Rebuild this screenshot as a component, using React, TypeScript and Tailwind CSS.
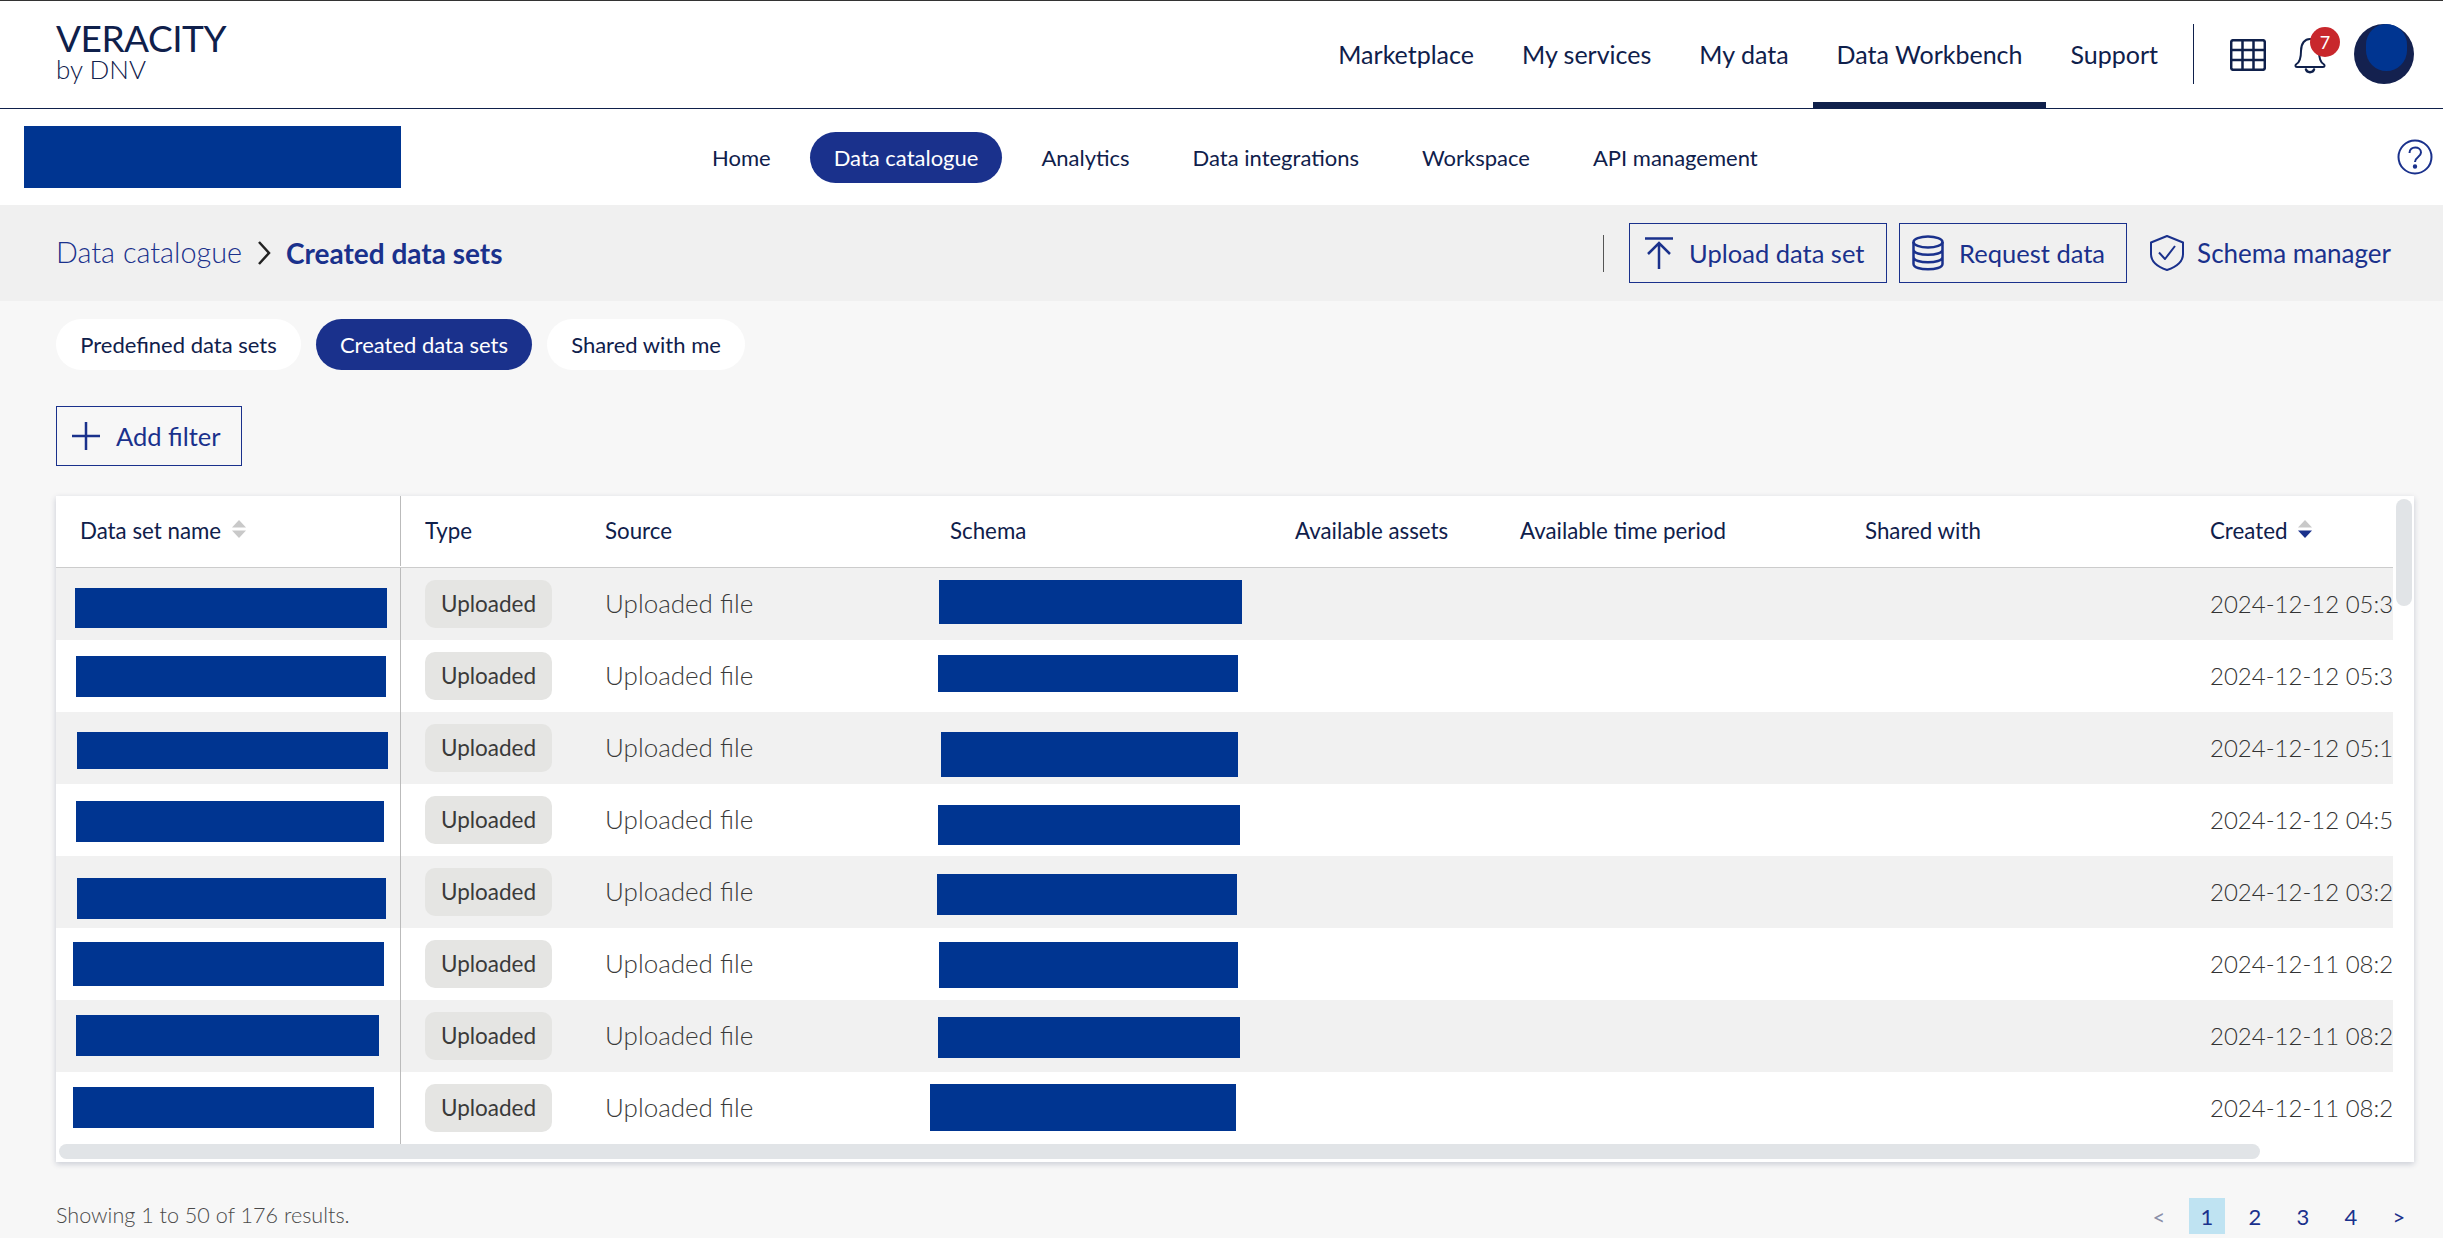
import React from "react";

const navy = "#0f204b";

const topNav = ["Marketplace", "My services", "My data", "Data Workbench", "Support"];
const subNav = ["Home", "Data catalogue", "Analytics", "Data integrations", "Workspace", "API management"];

// redaction boxes over the name and schema cells: [left, top, width, height] relative to the row
const rows = [
  { date: "2024-12-12 05:31:18", name: [19, 20, 312, 40], schema: [13, 12, 303, 44] },
  { date: "2024-12-12 05:30:42", name: [20, 16, 310, 41], schema: [12, 15, 300, 37] },
  { date: "2024-12-12 05:12:09", name: [21, 20, 311, 37], schema: [15, 20, 297, 45] },
  { date: "2024-12-12 04:54:37", name: [20, 17, 308, 41], schema: [12, 21, 302, 40] },
  { date: "2024-12-12 03:26:51", name: [21, 22, 309, 41], schema: [11, 18, 300, 41] },
  { date: "2024-12-11 08:27:14", name: [17, 14, 311, 44], schema: [13, 14, 299, 46] },
  { date: "2024-12-11 08:25:33", name: [20, 15, 303, 41], schema: [12, 17, 302, 41] },
  { date: "2024-12-11 08:21:05", name: [17, 15, 301, 41], schema: [4, 12, 306, 47] },
];

const SortIcon = ({ active }: { active?: boolean }) => (
  <svg width="14" height="18" viewBox="0 0 14 18" className="ml-[11px] -mt-1">
    <path d="M7 0 L14 7.5 H0 Z" fill="#c9c9c9" />
    <path d="M0 10.5 H14 L7 18 Z" fill={active ? "#1a318c" : "#c9c9c9"} />
  </svg>
);

const Redaction = ({ box }: { box: number[] }) => (
  <div
    className="absolute bg-[#003591]"
    style={{ left: box[0], top: box[1], width: box[2], height: box[3] }}
  />
);

const App: React.FC = () => {
  return (
    <div className="w-[2443px] h-[1238px] overflow-hidden bg-[#f7f7f7] flex flex-col font-['Lato',sans-serif] text-[#0f204b]">
      {/* Top bar */}
      <header className="h-[109px] shrink-0 bg-white border-t border-t-[#333333] border-b border-b-[#0f204b] flex items-stretch pl-[56px] pr-[29px]">
        <div className="flex flex-col pt-[18px]">
          <div className="text-[37px] leading-[38px] font-normal tracking-[-0.5px]">VERACITY</div>
          <div className="text-[26px] leading-[25px] font-light">by DNV</div>
        </div>
        <nav className="ml-auto flex items-stretch">
          {topNav.map((item) => (
            <div
              key={item}
              className={`px-6 flex items-center text-[25px] pt-[6px] border-b-[6px] ${
                item === "Data Workbench" ? "border-[#0f204b]" : "border-transparent"
              }`}
            >
              {item}
            </div>
          ))}
        </nav>
        <div className="flex items-center pb-[1px] ml-[11px]">
          <div className="w-px h-[60px] bg-[#0f204b]" />
          <svg width="36" height="32" viewBox="0 0 36 32" fill="none" stroke={navy} strokeWidth="2.5" className="ml-[36px] mt-[1px]">
            <rect x="1.2" y="1.2" width="33.6" height="29.6" rx="2" />
            <path d="M1 11 H35 M1 21 H35 M12.5 1 V31 M23.5 1 V31" />
          </svg>
          <div className="relative ml-[28px] w-[32px] h-[44px]">
            <svg width="32" height="38" viewBox="0 0 32 38" fill="none" stroke={navy} strokeWidth="2" strokeLinejoin="round" strokeLinecap="round" className="mt-[6px]">
              <path d="M3 29 C1 29 1 27 2.5 26 C6 24 7 20 7 13 C7 5 11 1 16 1 C21 1 25 5 25 13 C25 20 26 24 29.5 26 C31 27 31 29 29 29 Z" />
              <path d="M12 31.5 C13 35 19 35 20 31.5" strokeWidth="2.5" />
            </svg>
            <div className="absolute left-[16px] -top-[5px] w-[30px] h-[30px] rounded-full bg-[#c8272c] text-white text-[18px] flex items-center justify-center">
              7
            </div>
          </div>
          <div className="relative ml-[28px] w-[60px] h-[60px] rounded-full bg-[#14214f]">
            <div className="absolute left-[12px] top-0 w-[41px] h-[47px] rounded-full bg-[#003591]" />
          </div>
        </div>
      </header>

      {/* Service bar */}
      <div className="h-[96px] shrink-0 bg-white flex items-center pl-[24px] pr-[10px]">
        <div className="w-[377px] h-[62px] bg-[#003591]" />
        <nav className="ml-[287px] flex items-center gap-[15px] text-[22px] text-[#0f204b]">
          {subNav.map((item) => (
            <div
              key={item}
              className={`h-[51px] px-6 rounded-full flex items-center ${
                item === "Data catalogue" ? "bg-[#1a318c] text-white" : ""
              }`}
            >
              {item}
            </div>
          ))}
        </nav>
        <svg width="36" height="36" viewBox="0 0 36 36" fill="none" stroke="#1a318c" strokeWidth="2" className="ml-auto">
          <circle cx="18" cy="18" r="16.5" />
          <path d="M12.5 14 C12.5 6.5 24 7 24 13.5 C24 18 18 18 18 23" />
          <circle cx="18" cy="27.5" r="1.2" fill="#1a318c" />
        </svg>
      </div>

      {/* Breadcrumb band */}
      <div className="h-[96px] shrink-0 bg-[#f0f0f0] flex items-center pl-[56px] pr-[52px] text-[#1a318c]">
        <span className="font-light text-[28.8px]">Data catalogue</span>
        <svg width="14" height="24" viewBox="0 0 14 24" fill="none" stroke="#222222" strokeWidth="2.5" className="mx-[15px]">
          <path d="M2 1 L12 12 L2 23" />
        </svg>
        <span className="font-bold text-[28px]">Created data sets</span>
        <div className="ml-auto flex items-center text-[25.5px]">
          <div className="w-px h-[37px] bg-[#555555] mr-[25px]" />
          <button className="w-[258px] h-[60px] border border-[#1a318c] flex items-center pl-[15px]">
            <svg width="28" height="32" viewBox="0 0 28 32" fill="none" stroke="#1a318c" strokeWidth="2.5">
              <path d="M0 1.5 H28 M14 6 V32 M3 17 L14 6 L25 17" />
            </svg>
            <span className="ml-[16px]">Upload data set</span>
          </button>
          <button className="ml-[12px] w-[228px] h-[60px] border border-[#1a318c] flex items-center pl-[12px]">
            <svg width="32" height="36" viewBox="0 0 32 36" fill="none" stroke="#1a318c" strokeWidth="2.5">
              <ellipse cx="16" cy="7" rx="14.5" ry="5.5" />
              <path d="M1.5 7 V29 C1.5 36 30.5 36 30.5 29 V7 M1.5 14.5 C1.5 21.5 30.5 21.5 30.5 14.5 M1.5 22 C1.5 29 30.5 29 30.5 22" />
            </svg>
            <span className="ml-[15px]">Request data</span>
          </button>
          <div className="ml-[23px] flex items-center text-[26px]">
            <svg width="34" height="36" viewBox="0 0 34 36" fill="none" stroke="#1a318c" strokeWidth="2" strokeLinejoin="round">
              <path d="M17 1 L33 7.5 V19 C33 27 26 32 17 35 C8 32 1 27 1 19 V7.5 Z" />
              <path d="M9 17.5 L15 24 L25 11" />
            </svg>
            <span className="ml-[13px]">Schema manager</span>
          </div>
        </div>
      </div>

      {/* Content */}
      <main className="flex-1 flex flex-col pl-[56px] pr-[29px] pt-[18px]">
        <div className="flex gap-[15px] text-[22px] text-[#0f204b]">
          <div className="h-[51px] w-[245px] rounded-full bg-white flex items-center justify-center">Predefined data sets</div>
          <div className="h-[51px] w-[216px] rounded-full bg-[#1a318c] text-white flex items-center justify-center">Created data sets</div>
          <div className="h-[51px] w-[198px] rounded-full bg-white flex items-center justify-center">Shared with me</div>
        </div>

        <button className="mt-[36px] w-[186px] h-[60px] border border-[#1a318c] bg-transparent text-[#1a318c] text-[25.5px] flex items-center pl-[15px]">
          <svg width="28" height="28" viewBox="0 0 28 28" fill="none" stroke="#1a318c" strokeWidth="2.5">
            <path d="M14 0 V28 M0 14 H28" />
          </svg>
          <span className="ml-[16px]">Add filter</span>
        </button>

        {/* Table */}
        <div className="relative mt-[30px] h-[666px] bg-white shadow-[0_2px_6px_rgba(15,32,75,0.2)] overflow-hidden">
          <div className="w-[2337px] overflow-hidden">
            <div className="h-[72px] pb-[1px] border-b border-[#cccccc] grid grid-cols-[345px_180px_345px_345px_225px_345px_345px_207px] items-center text-[22.3px]">
              <div className="h-full pl-6 flex items-center border-r border-[#bbbbbb]">
                Data set name
                <SortIcon />
              </div>
              <div className="pl-6">Type</div>
              <div className="pl-6">Source</div>
              <div className="pl-6">Schema</div>
              <div className="pl-6">Available assets</div>
              <div className="pl-6">Available time period</div>
              <div className="pl-6">Shared with</div>
              <div className="pl-6 flex items-center">
                Created
                <SortIcon active />
              </div>
            </div>
            {rows.map((row, i) => (
              <div
                key={i}
                className={`h-[72px] grid grid-cols-[345px_180px_345px_345px_225px_345px_345px_207px] items-center text-[26px] font-light text-[#3a3a3a] ${
                  i % 2 === 0 ? "bg-[#f1f1f1]" : "bg-white"
                }`}
              >
                <div className="relative h-full border-r border-[#bbbbbb]">
                  <Redaction box={row.name} />
                </div>
                <div className="pl-6">
                  <span className="w-[127px] h-[48px] rounded-[10px] bg-[#e5e5e3] text-[22.5px] font-normal flex items-center justify-center">
                    Uploaded
                  </span>
                </div>
                <div className="pl-6 pb-[2px]">Uploaded file</div>
                <div className="relative h-full">
                  <Redaction box={row.schema} />
                </div>
                <div />
                <div />
                <div />
                <div className="pl-6 whitespace-nowrap overflow-hidden text-[24px] text-[#333333]">{row.date}</div>
              </div>
            ))}
          </div>
          {/* Scrollbars */}
          <div className="absolute left-[3px] bottom-[3px] w-[2201px] h-[15px] rounded-full bg-[#e1e4e7]" />
          <div className="absolute right-[2px] top-[3px] w-[16px] h-[107px] rounded-full bg-[#e1e4e7]" />
        </div>

        {/* Footer */}
        <div className="mt-[36px] -mr-[3px] flex items-center text-[#4a4a4a] font-light text-[21.6px]">
          <span className="pb-[2px]">Showing 1 to 50 of 176 results.</span>
          <div className="ml-auto flex items-center gap-[12px] text-[#1a318c] font-normal text-[22px]">
            <span className="w-[36px] h-[36px] flex items-center justify-center text-[#8a8fa8]">&lt;</span>
            <span className="w-[36px] h-[36px] flex items-center justify-center bg-[#bfe3f2]">1</span>
            <span className="w-[36px] h-[36px] flex items-center justify-center">2</span>
            <span className="w-[36px] h-[36px] flex items-center justify-center">3</span>
            <span className="w-[36px] h-[36px] flex items-center justify-center">4</span>
            <span className="w-[36px] h-[36px] flex items-center justify-center">&gt;</span>
          </div>
        </div>
      </main>
    </div>
  );
};

export default App;
